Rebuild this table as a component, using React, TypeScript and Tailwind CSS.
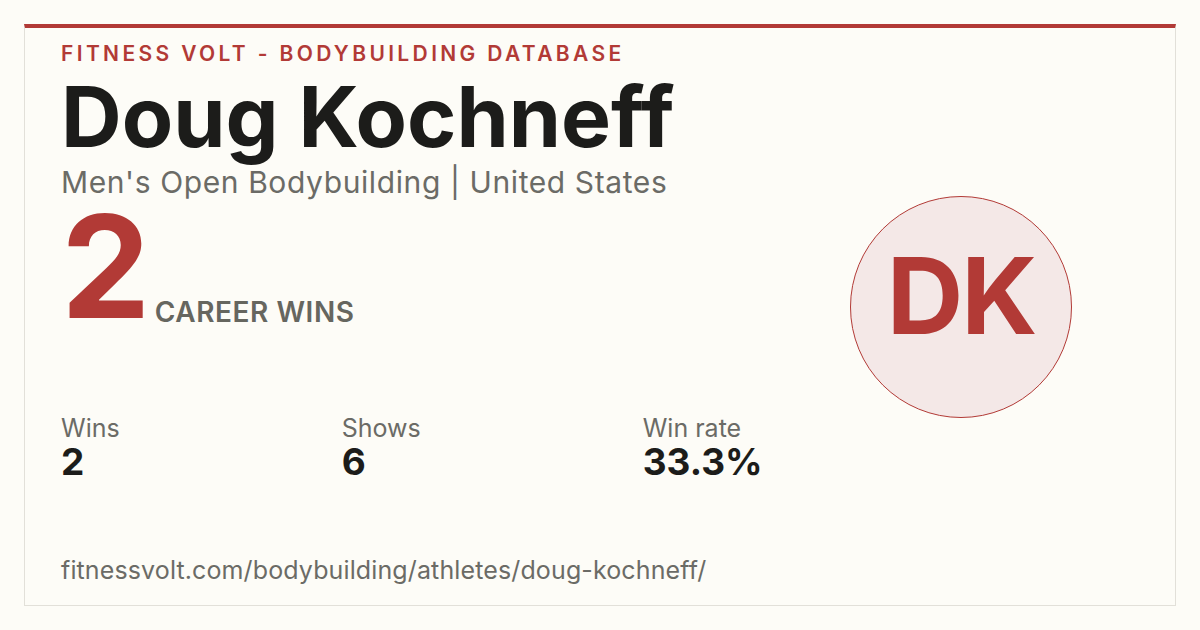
export default function App() {
  const font = { fontFamily: "Inter, 'Noto Sans', sans-serif" };
  return (
    <div className="w-[1200px] h-[630px] bg-[#fdfcf7] p-6" style={font}>
      <div className="relative h-full border border-[#e2e0d9] border-t-4 border-t-[#b23a36] px-9 pt-3 flex flex-col">
        <div className="text-[21px] leading-[28px] font-semibold tracking-[0.16em] text-[#b23a36]">
          FITNESS VOLT - BODYBUILDING DATABASE
        </div>
        <h1 className="mt-1 text-[84px] leading-[90px] font-bold text-[#1c1c1a]">
          Doug Kochneff
        </h1>
        <div className="mt-[2px] text-[30px] leading-[36px] tracking-[0.02em] text-[#6b6b66]">
          Men's Open Bodybuilding | United States
        </div>

        <div className="mt-[6px] flex items-end gap-[10px]">
          <span className="text-[142px] leading-[120px] font-bold tracking-[-0.04em] text-[#b23a36]">2</span>
          <span className="mb-[-2px] text-[28px] leading-[32px] font-semibold tracking-[0.02em] text-[#66665f]">CAREER WINS</span>
        </div>

        <div className="mt-[89px] flex gap-[222px]">
          <div className="flex flex-col">
            <span className="text-[25px] leading-[26px] text-[#6b6b66]">Wins</span>
            <span className="text-[37px] leading-[42px] font-bold text-[#1c1c1a]">2</span>
          </div>
          <div className="flex flex-col">
            <span className="text-[25px] leading-[26px] text-[#6b6b66]">Shows</span>
            <span className="text-[37px] leading-[42px] font-bold text-[#1c1c1a]">6</span>
          </div>
          <div className="flex flex-col">
            <span className="text-[25px] leading-[26px] text-[#6b6b66]">Win rate</span>
            <span className="text-[37px] leading-[42px] font-bold text-[#1c1c1a]">33.3%</span>
          </div>
        </div>

        <div className="mt-auto mb-[20px] text-[25px] leading-[30px] tracking-[0.005em] text-[#6b6b66]">
          fitnessvolt.com/bodybuilding/athletes/doug-kochneff/
        </div>

        <div className="absolute left-[825px] top-[168px] w-[222px] h-[222px] rounded-full border-[1.5px] border-[#b23a36] bg-[#f4e8e7] flex items-center justify-center">
          <span className="text-[106px] leading-none font-bold tracking-[-0.02em] text-[#b23a36] -mt-[22px]">DK</span>
        </div>
      </div>
    </div>
  );
}
